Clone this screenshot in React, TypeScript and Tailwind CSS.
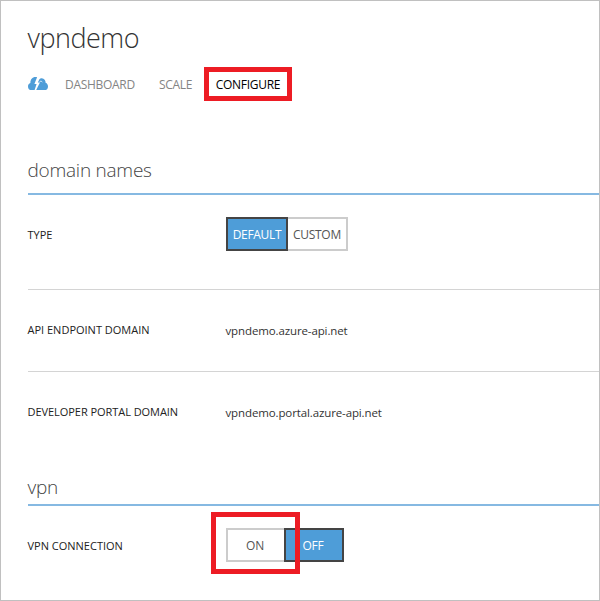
import type { ReactNode } from "react";

function CloudIcon() {
  return (
    <svg width="20" height="13" viewBox="0 0 20 13" className="mb-0.5 block shrink-0">
      <path
        fill="#4e9dd8"
        d="M3.6 13A3.6 3.6 0 0 1 0 9.4C0 7.5 1 6.4 2.4 6C2.2 2.6 4.4 0 7.4 0C8 0 8.6.1 9.1.3L6.4 6.9H8.6L6.6 13Z"
      />
      <path
        fill="#4e9dd8"
        d="M8.2 13L11.9 5.5H9.8L11.4 2.2C12 1.5 12.9 1.2 13.8 1.3C16.2 1.5 17.7 3.4 17.6 5.8C19.1 6.4 20 7.7 20 9.4A3.6 3.6 0 0 1 16.4 13Z"
      />
      <path fill="none" stroke="#fff" strokeWidth="0.8" d="M11.6 4.7C12.6 4 13.6 4.2 14.3 5" />
    </svg>
  );
}

function SectionTitle({ children, className }: { children: ReactNode; className: string }) {
  return (
    <h2
      className={`border-b-2 border-[#86b9e2] text-[19px] leading-6 font-light tracking-[-0.24px] text-[#444] ${className}`}
    >
      <span className="-ml-[0.5px]">{children}</span>
    </h2>
  );
}

function Row({ label, labelClass, className, children }: { label: string; labelClass: string; className: string; children: ReactNode }) {
  return (
    <div className={`flex items-center ${className}`}>
      <div className={`w-[198px] shrink-0 text-[11px] leading-4 text-[#222] ${labelClass}`}>
        <span className="-ml-[0.5px]">{label}</span>
      </div>
      {children}
    </div>
  );
}

function ToggleButton({ active, className, children }: { active?: boolean; className: string; children: ReactNode }) {
  return (
    <button
      className={`flex h-[34px] items-center justify-center border-2 pt-0.5 text-xs tracking-[-0.3px] whitespace-nowrap ${
        active ? "border-[#444] bg-[#4e9dd8] text-white" : "border-[#ccc] bg-white text-[#555]"
      } ${className}`}
    >
      {children}
    </button>
  );
}

function Value({ children }: { children: ReactNode }) {
  return <span className="-ml-[0.5px] text-[11.5px] tracking-[-0.12px] text-[#333]">{children}</span>;
}

export default function App() {
  return (
    <div className="h-[601px] w-[600px] overflow-hidden border border-[#c0c0c0] bg-white pl-[27px] font-['Open_Sans','Noto_Sans',sans-serif]">
      <h1 className="mt-[19px] -ml-[0.5px] h-9 text-[27px] leading-9 font-light tracking-[-0.5px] text-[#333]">
        vpndemo
      </h1>
      <nav className="mt-[11px] flex h-[34px] items-center text-xs tracking-[-0.3px] text-[#848484]">
        <CloudIcon />
        <span className="ml-[17px] w-[94px] pt-px">DASHBOARD</span>
        <span className="w-[45px] pt-px">SCALE</span>
        <span className="flex h-[34px] w-[88px] items-center justify-center border-5 border-[#ed1c24] pt-px text-black">
          CONFIGURE
        </span>
      </nav>
      <SectionTitle className="mt-[57px] h-[37px]">domain names</SectionTitle>
      <Row label="TYPE" labelClass="pt-0.5" className="h-[95px] border-b border-[#d4d4d4] pb-4">
        <ToggleButton active className="w-[62px]">DEFAULT</ToggleButton>
        <ToggleButton className="w-[60px] border-l-0">CUSTOM</ToggleButton>
      </Row>
      <Row label="API ENDPOINT DOMAIN" labelClass="pb-0.5" className="h-[82px] border-b border-[#d4d4d4]">
        <Value>vpndemo.azure-api.net</Value>
      </Row>
      <Row label="DEVELOPER PORTAL DOMAIN" labelClass="pb-0.5 tracking-[-0.05px]" className="h-[82px]">
        <Value>vpndemo.portal.azure-api.net</Value>
      </Row>
      <SectionTitle className="mt-[21px] h-[31px]">vpn</SectionTitle>
      <Row label="VPN CONNECTION" labelClass="pt-0.5" className="h-[79px] pb-0.5">
        <div className="relative flex">
          <ToggleButton className="w-[58px] border-r-0 pr-0.5">ON</ToggleButton>
          <ToggleButton active className="w-[60px] pr-0.5">OFF</ToggleButton>
          <span className="absolute -top-4 -left-[15px] h-[62px] w-[89px] border-5 border-[#ed1c24]" />
        </div>
      </Row>
    </div>
  );
}
